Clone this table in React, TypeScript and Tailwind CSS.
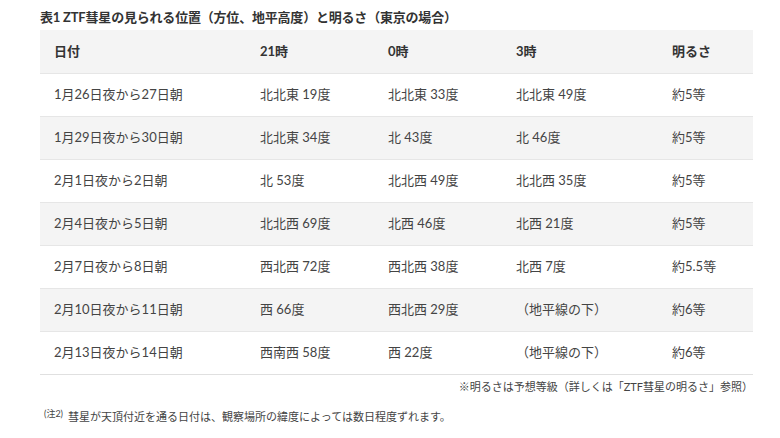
const rows = [
  ['1月26日夜から27日朝', '北北東 19度', '北北東 33度', '北北東 49度', '約5等'],
  ['1月29日夜から30日朝', '北北東 34度', '北 43度', '北 46度', '約5等'],
  ['2月1日夜から2日朝', '北 53度', '北北西 49度', '北北西 35度', '約5等'],
  ['2月4日夜から5日朝', '北北西 69度', '北西 46度', '北西 21度', '約5等'],
  ['2月7日夜から8日朝', '西北西 72度', '西北西 38度', '北西 7度', '約5.5等'],
  ['2月10日夜から11日朝', '西 66度', '西北西 29度', '（地平線の下）', '約6等'],
  ['2月13日夜から14日朝', '西南西 58度', '西 22度', '（地平線の下）', '約6等'],
];

export default function App() {
  return (
    <div
      className="w-[780px] h-[438px] overflow-hidden bg-white text-[#444]"
      style={{ fontFamily: "Lato, 'Noto Sans CJK JP', sans-serif" }}
    >
      <div className="pl-[40px] pr-[27px]">
        {/* 表タイトル */}
        <h2 className="pt-[8px] h-[30px] text-[13px] font-bold text-[#333] leading-[18px] tracking-[-0.2px]">
          表1 ZTF彗星の見られる位置（方位、地平高度）と明るさ（東京の場合）
        </h2>

        <table className="w-[713px] table-fixed border-collapse text-[13px]">
          <colgroup>
            <col className="w-[206px]" />
            <col className="w-[128px]" />
            <col className="w-[128px]" />
            <col className="w-[156px]" />
            <col className="w-[95px]" />
          </colgroup>
          <thead>
            <tr className="h-[43px] bg-[#f4f4f4] text-[#333] font-bold">
              <th className="pl-[14px] text-left">日付</th>
              <th className="pl-[14px] text-left">21時</th>
              <th className="pl-[14px] text-left">0時</th>
              <th className="pl-[14px] text-left">3時</th>
              <th className="pl-[14px] text-left">明るさ</th>
            </tr>
          </thead>
          <tbody>
            {rows.map((r, i) => (
              <tr
                key={i}
                className={`h-[43px] border-t border-[#e6e6e6] ${i % 2 === 1 ? 'bg-[#f4f4f4]' : 'bg-white'}`}
              >
                {r.map((c, j) => (
                  <td key={j} className="pl-[14px]">
                    {c}
                  </td>
                ))}
              </tr>
            ))}
          </tbody>
        </table>
        <div className="w-[713px] border-t border-[#e0e0e0]" />

        {/* 注記 */}
        <p className="w-[713px] mt-[3px] text-right text-[11px] leading-[18px] text-[#444]">
          ※明るさは予想等級（詳しくは「ZTF彗星の明るさ」参照）
        </p>
        <p className="mt-[12px] pl-[4px] text-[11px] leading-[18px] text-[#444]">
          <span className="relative top-[-4px] mr-[5px] text-[9px]">(注2)</span>
          彗星が天頂付近を通る日付は、観察場所の緯度によっては数日程度ずれます。
        </p>
      </div>
    </div>
  );
}
